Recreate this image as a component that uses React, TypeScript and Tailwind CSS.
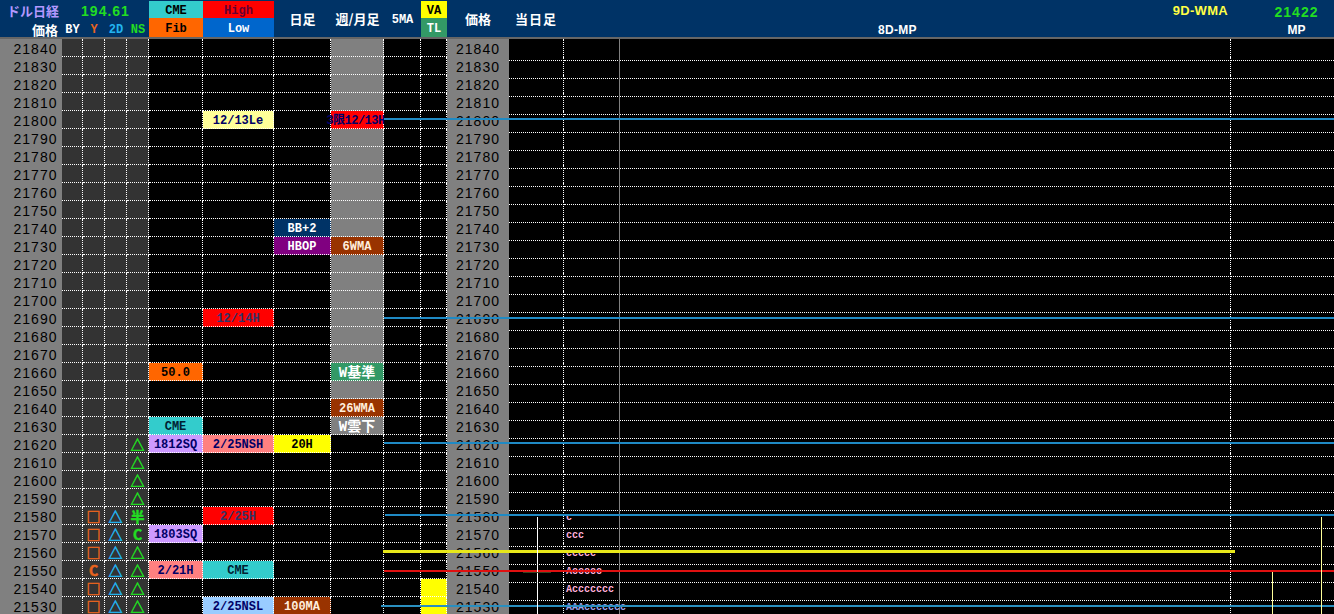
type Cell = { text?: string; className?: string; size?: string }

const gridCols = "grid grid-cols-[62px_21px_22px_22px_22px_54px_71px_57px_53px_37px_26px_62px_55px_56px_611px_103px]"
const monoFace = "font-['Liberation_Mono','Noto_Sans_CJK_JP',monospace] font-bold leading-none"
const mono = `${monoFace} text-[12px]`
const jp = "font-['Noto_Sans_CJK_JP',sans-serif] font-bold leading-none"
const sans = "font-['Liberation_Sans',sans-serif] font-bold"

const navy = "text-[#000066]"
const tri = "△"
const sq = "□"
const orange = "text-[#e8641e]"
const sky = "text-[#22b4f0]"
const green = "text-[#22dd22]"
const big = "text-[14px]"

const cells: Record<number, Record<number, Cell>> = {
  21800: {
    6: { text: "12/13Le", className: `bg-[#ffff99] ${navy}` },
    8: { text: "3限12/13H", className: "bg-[#ff0000] text-[#000066] tracking-[-0.5px] pr-[3px]" },
  },
  21740: { 7: { text: "BB+2", className: "bg-[#003366] text-white" } },
  21730: {
    7: { text: "HBOP", className: "bg-[#800080] text-white" },
    8: { text: "6WMA", className: "bg-[#993300] text-[#ffeedd]" },
  },
  21690: { 6: { text: "12/14H", className: "bg-[#ff0000] text-[#333366]" } },
  21660: {
    5: { text: "50.0", className: "bg-[#ff6600] text-black" },
    8: { text: "W基準", className: "bg-[#339966] text-white", size: big },
  },
  21640: { 8: { text: "26WMA", className: "bg-[#993300] text-[#ffeedd]" } },
  21630: {
    5: { text: "CME", className: "bg-[#33cccc] text-[#002233]" },
    8: { text: "W雲下", className: "bg-[#808080] text-white", size: big },
  },
  21620: {
    4: { text: tri, className: green },
    5: { text: "1812SQ", className: `bg-[#cc99ff] ${navy}` },
    6: { text: "2/25NSH", className: `bg-[#ff8080] ${navy}` },
    7: { text: "20H", className: "bg-[#ffff00] text-black" },
  },
  21610: { 4: { text: tri, className: green } },
  21600: { 4: { text: tri, className: green } },
  21590: { 4: { text: tri, className: green } },
  21580: {
    2: { text: sq, className: orange },
    3: { text: tri, className: sky },
    4: { text: "半", className: green },
    6: { text: "2/25H", className: "bg-[#ff0000] text-[#333366]" },
  },
  21570: {
    2: { text: sq, className: orange },
    3: { text: tri, className: sky },
    4: { text: "C", className: green },
    5: { text: "1803SQ", className: `bg-[#cc99ff] ${navy}` },
  },
  21560: {
    2: { text: sq, className: orange },
    3: { text: tri, className: sky },
    4: { text: tri, className: green },
  },
  21550: {
    2: { text: "C", className: orange },
    3: { text: tri, className: sky },
    4: { text: tri, className: green },
    5: { text: "2/21H", className: `bg-[#ff8080] ${navy}` },
    6: { text: "CME", className: "bg-[#33cccc] text-[#002233]" },
  },
  21540: {
    2: { text: sq, className: orange },
    3: { text: tri, className: sky },
    4: { text: tri, className: green },
    10: { className: "bg-[#ffff00]" },
  },
  21530: {
    2: { text: sq, className: orange },
    3: { text: tri, className: sky },
    4: { text: tri, className: green },
    6: { text: "2/25NSL", className: `bg-[#99ccff] ${navy}` },
    7: { text: "100MA", className: "bg-[#993300] text-[#ffeedd]" },
    10: { className: "bg-[#ffff00]" },
  },
}

const letters: Record<number, { text: string; className: string }> = {
  21580: { text: "c", className: "text-[#ffb0d8]" },
  21570: { text: "ccc", className: "text-[#ffb0d8]" },
  21560: { text: "ccccc", className: "text-[#ffb0d8]" },
  21550: { text: "Accccc", className: "text-[#ffb0d8]" },
  21540: { text: "Accccccc", className: "text-[#ffb0d8]" },
  21530: { text: "AAAccccccc", className: "text-[#a0a0e8]" },
}

const prices: number[] = []
for (let p = 21840; p >= 21530; p -= 10) prices.push(p)

const lines = [
  "top-[118px] left-[384px] right-0 h-[2px] bg-[#1f8ac4]",
  "top-[317px] left-[384px] right-0 h-[2px] bg-[#1f8ac4]",
  "top-[442px] left-[384px] right-0 h-[2px] bg-[#1f8ac4]",
  "top-[514px] left-[385px] right-0 h-[2px] bg-[#1f8ac4]",
  "top-[605px] left-[381px] right-0 h-[2px] bg-[#2a8fbf]",
  "top-[550px] left-[383px] w-[852px] h-[3px] bg-[#e8e81a]",
  "top-[570px] left-[384px] right-0 h-[2px] bg-[#e01010]",
  "top-[517px] left-[537px] w-px h-[97px] bg-white",
  "top-[572px] left-[1272px] w-px h-[42px] bg-[#ffff99]",
  "top-[517px] left-[1321px] w-px h-[97px] bg-[#ffff99]",
  "top-[572px] left-[523px] w-[28px] h-px bg-[#334422]",
]

const PriceCell = ({ value, className }: { value: number; className: string }) => (
  <div className={`flex items-center justify-center h-full bg-[#808080] border-b border-dotted border-white font-['Liberation_Sans',sans-serif] text-[14px] tracking-[1px] text-black ${className}`}>
    {value}
  </div>
)

const Row = ({ price }: { price: number }) => {
  const row = cells[price] || {}
  const letter = letters[price]

  const cellAt = (col: number) => {
    const cell = row[col]
    const hasBg = cell?.className?.includes("bg-")
    let bg = ""
    if (col >= 1 && col <= 4) bg = "bg-[#333333]"
    if (col === 8 && price >= 21630 && !hasBg) bg = "bg-[#808080]"
    const isMark = col >= 1 && col <= 4
    return (
      <div
        key={col}
        className={`flex items-center justify-center h-[18px] whitespace-nowrap border-r border-b border-dotted border-white ${bg} ${
          isMark
            ? `${jp} text-[14px] [-webkit-text-stroke:0.5px_currentColor]`
            : `${monoFace} pt-[2px] ${cell?.size || "text-[12px]"}`
        } ${cell?.className || ""}`}
      >
        {cell?.text}
      </div>
    )
  }

  return (
    <div className={`${gridCols} h-[18px]`}>
      <PriceCell value={price} className="pl-[9px]" />
      {[1, 2, 3, 4, 5, 6, 7, 8, 9, 10].map(cellAt)}
      <PriceCell value={price} className="" />
      <div className="border-r border-b border-dotted border-white" />
      <div className="flex items-center pl-[2px] border-r border-b border-dotted border-b-white border-r-[#808080] [border-right-style:solid]">
        {letter && (
          <span className={`font-['Liberation_Mono',monospace] font-bold text-[10px] leading-none whitespace-nowrap ${letter.className}`}>
            {letter.text}
          </span>
        )}
      </div>
      <div className="border-r border-b border-dotted border-white" />
      <div className="border-b border-dotted border-white" />
    </div>
  )
}

const Header = () => (
  <div className={`${gridCols} grid-rows-[18px_19px] h-[39px] bg-[#003366] border-b-2 border-[#666666]`}>
    <div className={`${jp} row-start-1 col-start-1 flex items-center justify-end pt-[2px] pr-[3px] text-[13px] text-[#b399ff]`}>ドル日経</div>
    <div className={`${jp} row-start-2 col-start-1 flex items-center justify-end pt-[4px] pr-[4px] text-[13px] text-white`}>価格</div>

    <div className={`${sans} row-start-1 col-start-2 col-span-4 flex items-center justify-center pt-[5px] text-[14px] tracking-[1px] text-[#22dd22]`}>194.61</div>
    <div className={`${mono} row-start-2 col-start-2 flex items-center justify-center pt-[5px] text-white`}>BY</div>
    <div className={`${mono} row-start-2 col-start-3 flex items-center justify-center pt-[5px] text-[#e8641e]`}>Y</div>
    <div className={`${mono} row-start-2 col-start-4 flex items-center justify-center pt-[5px] text-[#22b4f0]`}>2D</div>
    <div className={`${mono} row-start-2 col-start-5 flex items-center justify-center pt-[5px] text-[#22dd22]`}>NS</div>

    <div className={`${mono} row-start-1 col-start-6 flex items-center justify-center mt-px pt-[3px] bg-[#33cccc] text-black`}>CME</div>
    <div className={`${mono} row-start-2 col-start-6 flex items-center justify-center pt-[3px] bg-[#ff6600] text-black`}>Fib</div>
    <div className={`${mono} row-start-1 col-start-7 flex items-center justify-center mt-px pt-[3px] bg-[#ff0000] text-[#660033]`}>High</div>
    <div className={`${mono} row-start-2 col-start-7 flex items-center justify-center pt-[3px] bg-[#0066cc] text-white`}>Low</div>

    <div className={`${jp} row-span-2 row-start-1 col-start-8 flex items-center justify-center text-[13px] text-white`}>日足</div>
    <div className={`${jp} row-span-2 row-start-1 col-start-9 flex items-center justify-center whitespace-nowrap text-[13px] text-white`}>週/月足</div>
    <div className={`${mono} row-span-2 row-start-1 col-start-10 flex items-center justify-center pt-[2px] text-white`}>5MA</div>

    <div className={`${mono} row-start-1 col-start-11 flex items-center justify-center mt-px pt-[3px] bg-[#ffff00] text-black`}>VA</div>
    <div className={`${mono} row-start-2 col-start-11 flex items-center justify-center pt-[3px] bg-[#339966] text-white`}>TL</div>

    <div className={`${jp} row-span-2 row-start-1 col-start-12 flex items-center justify-center text-[13px] text-white`}>価格</div>
    <div className={`${jp} row-span-2 row-start-1 col-start-13 col-span-2 flex items-center pl-[6px] text-[13px] tracking-[1px] text-white`}>当日足</div>

    <div className={`${sans} row-start-1 col-start-15 flex items-center justify-end pt-[4px] pr-[3px] text-[13px] tracking-[0.3px] text-[#ffff44]`}>9D-WMA</div>
    <div className={`${sans} row-start-2 col-start-15 flex items-center justify-center pt-[4px] pr-[56px] text-[12px] tracking-[0.3px] text-white`}>8D-MP</div>

    <div className={`${sans} row-start-1 col-start-16 flex items-center justify-center pt-[6px] pl-[28px] text-[14px] tracking-[1px] text-[#22dd22]`}>21422</div>
    <div className={`${sans} row-start-2 col-start-16 flex items-center justify-center pt-[4px] pl-[28px] text-[12px] text-white`}>MP</div>
  </div>
)

const App = () => {
  return (
    <div className="relative w-[1334px] h-[614px] overflow-hidden bg-black">
      <Header />
      {prices.map((p) => (
        <Row key={p} price={p} />
      ))}
      {lines.map((line) => (
        <div key={line} className={`absolute ${line}`} />
      ))}
    </div>
  )
}

export default App
